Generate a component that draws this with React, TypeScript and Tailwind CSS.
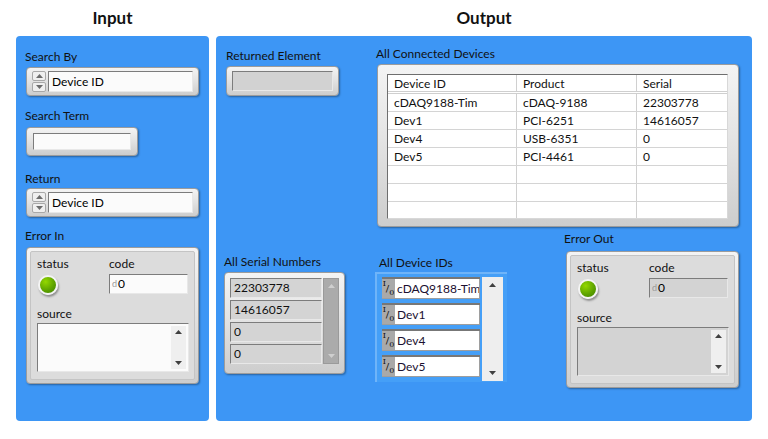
import React from "react";

const Up = ({ c = "#6b6b6b" }: { c?: string }) => (
  <svg width="7" height="4" viewBox="0 0 7 4">
    <path d="M0 4 L3.5 0 L7 4Z" fill={c} />
  </svg>
);
const Down = ({ c = "#6b6b6b" }: { c?: string }) => (
  <svg width="7" height="4" viewBox="0 0 7 4">
    <path d="M0 0 L3.5 4 L7 0Z" fill={c} />
  </svg>
);

const Label = ({ children, className = "" }: { children: React.ReactNode; className?: string }) => (
  <div className={`text-[12px] leading-[14px] text-[#111] whitespace-nowrap ${className}`}>{children}</div>
);

const frame =
  "rounded-[4px] border border-[#9c9c9c] bg-gradient-to-b from-[#f4f4f4] via-[#e2e2e2] to-[#cdcdcd] shadow-[1px_1px_2px_rgba(0,0,0,0.35)]";
const inset = "border border-t-[#7c7c7c] border-l-[#7c7c7c] border-b-[#e8e8e8] border-r-[#e8e8e8]";

const Ring = ({ value }: { value: string }) => (
  <div className={`ml-[1px] w-[173px] h-[29px] flex items-center gap-[2px] px-[5px] ${frame}`}>
    <div className="w-[14px] h-[21px] flex flex-col gap-[1px]">
      <div className="flex-1 flex items-center justify-center rounded-[2px] border border-[#a8a8a8] bg-[#efefef]">
        <Up />
      </div>
      <div className="flex-1 flex items-center justify-center rounded-[2px] border border-[#a8a8a8] bg-[#efefef]">
        <Down />
      </div>
    </div>
    <div className={`flex-1 h-[21px] bg-[#fbfbfb] ${inset} flex items-center pl-[3px] text-[12px] text-black`}>{value}</div>
  </div>
);

const Led = () => (
  <div className="w-[20px] h-[20px] rounded-full border-2 border-[#f4f4f4] bg-[radial-gradient(circle_at_35%_30%,#94d800,#5fa400_55%,#3d7f00)] shadow-[1px_2px_2px_rgba(0,0,0,0.35)]" />
);

const ErrorCluster = ({ indicator }: { indicator?: boolean }) => {
  const field = indicator ? "bg-[#d3d3d3]" : "bg-[#fbfbfb]";
  return (
    <div className={`w-[173px] h-[137px] p-[3px] ${frame}`}>
      <div className="h-full rounded-[2px] border border-[#c4c4c4] bg-[#dcdcdc] px-[6px] pt-[5px]">
        <div className="flex">
          <div className="w-[72px]">
            <Label>status</Label>
            <div className="ml-[1px] mt-[4px]">
              <Led />
            </div>
          </div>
          <div className="w-[79px]">
            <Label>code</Label>
            <div className={`mt-[3px] h-[20px] ${field} ${inset} flex items-center pl-[2px] text-[12px] text-black`}>
              <span className="text-[9px] text-[#9a9a9a] mr-[1px]">d</span>0
            </div>
          </div>
        </div>
        <Label className="mt-[12px]">source</Label>
        <div className={`mt-[2px] w-[152px] h-[49px] ${field} ${inset} flex justify-end p-[2px]`}>
          <div className="w-[15px] h-full bg-[#efefef] flex flex-col items-center justify-between py-[4px]">
            <Up c="#404040" />
            <Down c="#404040" />
          </div>
        </div>
      </div>
    </div>
  );
};

const devices = [
  ["cDAQ9188-Tim", "cDAQ-9188", "22303778"],
  ["Dev1", "PCI-6251", "14616057"],
  ["Dev4", "USB-6351", "0"],
  ["Dev5", "PCI-4461", "0"],
  ["", "", ""],
  ["", "", ""],
  ["", "", ""],
];

const Table = () => (
  <div className={`ml-[2px] mt-[3px] w-[362px] h-[163px] pl-[9px] pr-[10px] pt-[9px] pb-[7px] ${frame}`}>
    <div className="w-full h-full bg-white border border-t-[#6e6e6e] border-l-[#6e6e6e] border-r-[#d8d8d8] border-b-[#d8d8d8] overflow-hidden">
      <div className="flex h-[19px] border-b-[3px] border-double border-[#cfcfcf] text-[12px] text-[#111]">
        <div className="w-[129px] pl-[6px] border-r border-[#d0d0d0] leading-[17px]">Device ID</div>
        <div className="w-[120px] pl-[6px] border-r border-[#d0d0d0] leading-[17px]">Product</div>
        <div className="flex-1 pl-[6px] leading-[17px]">Serial</div>
      </div>
      {devices.map((r, i) => (
        <div key={i} className="flex h-[18px] border-b border-[#d4d4d4] text-[12px] text-[#111]">
          <div className="w-[129px] pl-[6px] border-r border-[#d0d0d0] leading-[17px]">{r[0]}</div>
          <div className="w-[120px] pl-[6px] border-r border-[#d0d0d0] leading-[17px]">{r[1]}</div>
          <div className="flex-1 pl-[6px] leading-[17px]">{r[2]}</div>
        </div>
      ))}
    </div>
  </div>
);

const SerialArray = () => (
  <div className={`mt-[3px] w-[121px] h-[102px] flex gap-[1px] pl-[5px] pt-[5px] ${frame}`}>
    <div className="w-[92px] flex flex-col gap-[2px]">
      {["22303778", "14616057", "0", "0"].map((s, i) => (
        <div key={i} className={`h-[20px] bg-[#d4d4d4] ${inset} flex items-center pl-[3px] text-[12px] text-[#111]`}>
          {s}
        </div>
      ))}
    </div>
    <div className="w-[16px] h-[86px] bg-[#ababab] border border-[#9a9a9a] flex flex-col items-center justify-between py-[5px]">
      <Up c="#cfcfcf" />
      <Down c="#cfcfcf" />
    </div>
  </div>
);

// LabVIEW string indicator glyph: small "I", slash, "0"
const IoGlyph = () => (
  <div className="w-[13px] h-full bg-[#a9a9a9] flex justify-center font-['DejaVu_Serif',serif] text-[#111] leading-none pt-[1px] pb-[1px]">
    <span className="text-[8px] self-start">I</span>
    <span className="text-[10px] self-center">/</span>
    <span className="text-[8px] self-end">0</span>
  </div>
);

const DeviceIdArray = () => (
  <div className="mt-[2px] w-[132px] h-[110px] bg-[#459ff7] border-t-2 border-l-2 border-[#6fb4f9] flex gap-[2px] pl-[5px] pt-[3px]">
    <div className="w-[98px] flex flex-col gap-[4px]">
      {["cDAQ9188-Tim", "Dev1", "Dev4", "Dev5"].map((s, i) => (
        <div key={i} className="h-[22px] bg-[#9e9e9e] border-t-2 border-[#777] flex pr-[1px] pb-[1px]">
          <IoGlyph />
          <div className="flex-1 bg-white flex items-center pl-[2px] text-[12px] text-[#1b1030] whitespace-nowrap overflow-hidden">
            {s}
          </div>
        </div>
      ))}
    </div>
    <div className="w-[21px] h-[104px] bg-[#eeeeee] flex flex-col items-center justify-between py-[6px]">
      <Up c="#404040" />
      <Down c="#404040" />
    </div>
  </div>
);

export default function App() {
  return (
    <div className="w-[768px] h-[439px] bg-white flex gap-[7px] pl-[16px] font-['Lato',sans-serif] overflow-hidden">
      <div className="w-[193px] flex flex-col">
        <div className="h-[36px] flex items-center justify-center text-[17px] font-bold text-[#111]">Input</div>
        <div className="h-[385px] rounded-[4px] bg-[#3d96f5] pl-[9px] pt-[14px]">
          <Label>Search By</Label>
          <div className="mt-[3px]">
            <Ring value="Device ID" />
          </div>
          <Label className="mt-[13px]">Search Term</Label>
          <div className={`mt-[4px] ml-[1px] w-[112px] h-[29px] px-[6px] py-[5px] ${frame}`}>
            <div className={`w-full h-full bg-[#fbfbfb] ${inset}`} />
          </div>
          <Label className="mt-[16px]">Return</Label>
          <div className="mt-[2px]">
            <Ring value="Device ID" />
          </div>
          <Label className="mt-[12px]">Error In</Label>
          <div className="mt-[4px] ml-[1px]">
            <ErrorCluster />
          </div>
        </div>
      </div>
      <div className="w-[536px] flex flex-col">
        <div className="h-[36px] flex items-center justify-center text-[17px] font-bold text-[#111]">Output</div>
        <div className="h-[385px] rounded-[4px] bg-[#3d96f5] flex pl-[8px]">
          <div className="w-[121px] pt-[13px]">
            <Label className="ml-[2px]">Returned Element</Label>
            <div className={`mt-[3px] ml-[2px] w-[113px] h-[30px] px-[5px] py-[4px] ${frame}`}>
              <div className={`w-full h-full bg-[#d2d2d2] ${inset}`} />
            </div>
            <Label className="mt-[159px]">All Serial Numbers</Label>
            <SerialArray />
          </div>
          <div className="ml-[30px] w-[364px] pt-[11px]">
            <Label className="ml-[1px]">All Connected Devices</Label>
            <Table />
            <div className="flex items-start">
              <div className="mt-[29px]">
                <Label className="ml-[4px]">All Device IDs</Label>
                <DeviceIdArray />
              </div>
              <div className="ml-auto mt-[5px]">
                <Label className="ml-[-2px]">Error Out</Label>
                <div className="mt-[5px]">
                  <ErrorCluster indicator />
                </div>
              </div>
            </div>
          </div>
        </div>
      </div>
    </div>
  );
}
